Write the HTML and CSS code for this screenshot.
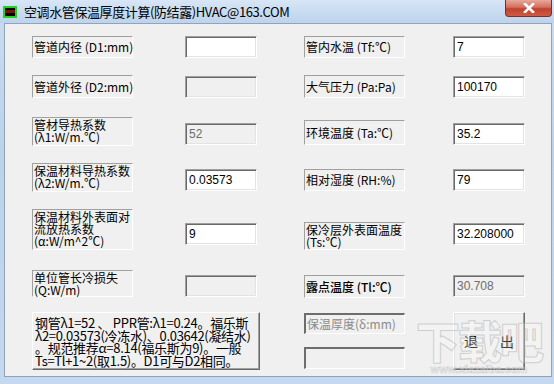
FILE: index.html
```html
<!DOCTYPE html>
<html lang="zh-CN">
<head>
    <meta charset="UTF-8">
    <title>空调水管保温厚度计算(防结露)HVAC@163.COM</title>
    <link rel="stylesheet" href="styles.css">
</head>
<body>
    <div class="window">
        <div class="titlebar">
            <span class="app-icon"></span>
            <span class="title">空调水管保温厚度计算(防结露)HVAC@163.COM</span>
            <button class="close">
                <svg width="14" height="10" viewBox="0 0 14 10"><path d="M3 1 L11 9 M11 1 L3 9" stroke="#fff" stroke-width="2.6" stroke-linecap="square"/></svg>
            </button>
        </div>

        <div class="client">
            <div class="form">
                <!-- row 1 -->
                <div class="field center">管道内径 (D1:mm)</div>
                <div class="edit c3"></div>
                <div class="field center c5">管内水温 (Tf:℃)</div>
                <div class="edit c7">7</div>

                <!-- row 2 -->
                <div class="field center h23">管道外径 (D2:mm)</div>
                <div class="edit c3 off down1"></div>
                <div class="field center c5 h23">大气压力 (Pa:Pa)</div>
                <div class="edit c7 down1">100170</div>

                <!-- row 3 -->
                <div class="field multi h29">管材导热系数<br>(λ1:W/m.℃)</div>
                <div class="edit c3 off down6">52</div>
                <div class="field center c5 h25 down3">环境温度 (Ta:℃)</div>
                <div class="edit c7 down6">35.2</div>

                <!-- row 4 -->
                <div class="field multi h29">保温材料导热系数<br>(λ2:W/m.℃)</div>
                <div class="edit c3 down6">0.03573</div>
                <div class="field center c5 down6">相对湿度 (RH:%)</div>
                <div class="edit c7 down6">79</div>

                <!-- row 5 -->
                <div class="field multi h41">保温材料外表面对<br>流放热系数<br>(α:W/m^2℃)</div>
                <div class="edit c3 down14">9</div>
                <div class="field multi c5 h28 down13">保冷层外表面温度<br>(Ts:℃)</div>
                <div class="edit c7 down14">32.208000</div>

                <!-- row 6 -->
                <div class="field multi h27">单位管长冷损失<br>(Q:W/m)</div>
                <div class="edit c3 off down5"></div>
                <div class="field center c5 h23 down5 strong">露点温度 (Tl:℃)</div>
                <div class="edit c7 off down5">30.708</div>

                <!-- row 7 -->
                <div class="note">钢管λ1=52 、 PPR管:λ1=0.24。福乐斯<br>λ2=0.03573(冷冻水)、0.03642(凝结水)<br>。规范推荐α=8.14(福乐斯为9)。一般<br>Ts=Tl+1~2(取1.5)。D1可与D2相同。</div>
                <div class="result c5">
                    <div class="field center sunk">保温厚度(δ:mm)</div>
                    <div class="edit wide off sunk"></div>
                </div>
                <button class="exit c7"><span>退</span><span>出</span></button>
            </div>

            <div class="watermark">
                <span class="mark">下载吧</span>
                <span class="site">www.xiazaiba.com</span>
            </div>
        </div>
    </div>
</body>
</html>
```

FILE: styles.css
```css
* {
    box-sizing: border-box;
}
body {
    margin: 0;
    width: 554px;
    height: 384px;
    overflow: hidden;
    font-family: "Noto Sans CJK SC", "DejaVu Sans", sans-serif;
    background: linear-gradient(180deg, #c9dcf1 0%, #bcd2ec 40%, #c4d8ef 100%);
}
.window {
    height: 384px;
    display: flex;
    flex-direction: column;
}
.titlebar {
    height: 23px;
    display: flex;
    align-items: center;
    padding-left: 3px;
    background: linear-gradient(180deg, #d8e6f6 0%, #c6daf0 60%, #bed3ec 100%);
}
.app-icon {
    width: 14px;
    height: 12px;
    margin-top: 1px;
    border: 2px solid #1fd41f;
    background: linear-gradient(180deg, #000 0 30%, #7a1408 30% 62%, #000 62%);
}
.title {
    margin-left: 7px;
    font-size: 13px;
    color: #000;
    letter-spacing: -0.4px;
}
.close {
    margin-left: auto;
    margin-right: 2px;
    align-self: flex-start;
    width: 47px;
    height: 17px;
    padding: 0;
    border: 1px solid #7b2e24;
    border-top: none;
    border-radius: 0 0 4px 4px;
    background: linear-gradient(180deg, #e7a89c 0%, #d2705f 45%, #c0412e 55%, #cf5c44 100%);
    display: flex;
    align-items: center;
    justify-content: center;
}
.client {
    position: relative;
    height: 354px;
    margin: 0 2px 0 4px;
    border: 1px solid #8fa3bb;
    background: #f0f0f0;
}
.form {
    display: grid;
    grid-template-columns: 101px 52px 72px 47px 101px 48px 72px;
    grid-template-rows: 39px 42px 46px 46px 61px 42px 58px;
    padding: 12px 0 0 27px;
}
.field {
    grid-column: 1;
    height: 22px;
    padding-left: 1px;
    border-top: 1px solid #a0a0a0;
    border-left: 1px solid #a0a0a0;
    border-right: 1px solid #fff;
    border-bottom: 1px solid #fff;
    font-size: 12px;
    line-height: 12px;
    color: #000;
    white-space: nowrap;
}
.center {
    display: flex;
    align-items: center;
}
.multi {
    padding-top: 1px;
}
.strong {
    font-weight: 500;
}
.edit {
    width: 72px;
    height: 22px;
    padding: 3px 3px 0;
    border-top: 1px solid #a0a0a0;
    border-left: 1px solid #a0a0a0;
    border-right: 1px solid #fff;
    border-bottom: 1px solid #fff;
    box-shadow: inset 1px 1px 0 #696969, inset -1px -1px 0 #e3e3e3;
    background: #fff;
    font-family: "Liberation Sans", Arial, sans-serif;
    font-size: 12px;
    line-height: 14px;
    color: #000;
}
.off {
    background: #f0f0f0;
    color: #6d6d6d;
}
.c3 { grid-column: 3; }
.c5 { grid-column: 5; }
.c7 { grid-column: 7; }
.h23 { height: 23px; }
.h25 { height: 25px; }
.h27 { height: 27px; }
.h28 { height: 28px; }
.h29 { height: 29px; }
.h41 { height: 41px; }
.down1 { margin-top: 1px; }
.down3 { margin-top: 3px; }
.down5 { margin-top: 5px; }
.down6 { margin-top: 6px; }
.down13 { margin-top: 13px; }
.down14 { margin-top: 14px; }
.note {
    grid-column: 1 / 4;
    margin-right: -3px;
    height: 58px;
    padding: 4px 0 0 2px;
    border-top: 1px solid #fff;
    border-left: 1px solid #fff;
    border-right: 1px solid #696969;
    border-bottom: 1px solid #696969;
    box-shadow: inset -1px -1px 0 #a0a0a0;
    font-size: 13px;
    line-height: 12.6px;
    white-space: nowrap;
    letter-spacing: -0.3px;
}
.result {
    display: flex;
    flex-direction: column;
    padding-top: 1px;
}
.sunk {
    border-top: 2px solid #6d6d6d;
    border-left: 2px solid #6d6d6d;
    border-right: 1px solid #fff;
    border-bottom: 1px solid #fff;
    box-shadow: none;
}
.result .field {
    height: 21px;
    color: #8a8a8a;
}
.wide {
    width: 101px;
    margin-top: 13px;
}
.exit {
    height: 58px;
    width: 72px;
    padding: 0;
    display: flex;
    justify-content: center;
    align-items: center;
    gap: 22px;
    border-top: 1px solid #fff;
    border-left: 1px solid #fff;
    border-right: 1px solid #696969;
    border-bottom: 1px solid #696969;
    box-shadow: inset -1px -1px 0 #a0a0a0, inset 1px 1px 0 #e3e3e3;
    background: #f0f0f0;
    font-family: "Noto Sans CJK SC", sans-serif;
    font-size: 14px;
    color: #000;
}
.watermark {
    position: absolute;
    left: 405px;
    top: 292px;
    width: 138px;
    display: flex;
    flex-direction: column;
    align-items: center;
    pointer-events: none;
}
.mark {
    font-family: "Noto Sans CJK SC", sans-serif;
    font-weight: 900;
    font-size: 44px;
    line-height: 48px;
    letter-spacing: -2px;
    color: rgba(255, 255, 255, 0.25);
    -webkit-text-stroke: 1px rgba(170, 170, 170, 0.5);
}
.site {
    font-family: "Liberation Sans", sans-serif;
    font-weight: bold;
    font-size: 11px;
    line-height: 11px;
    color: rgba(255, 255, 255, 0.3);
    -webkit-text-stroke: 0.5px rgba(170, 170, 170, 0.6);
}
```
